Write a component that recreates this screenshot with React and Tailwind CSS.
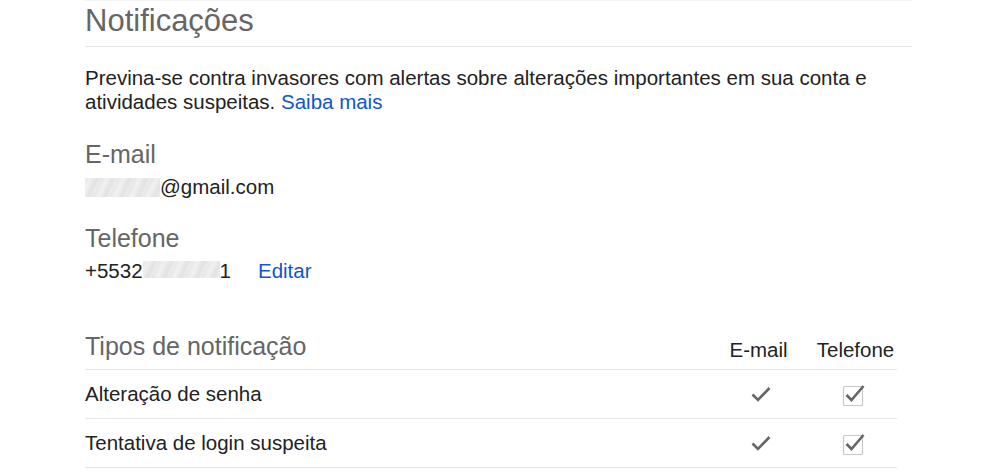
import React from 'react'

const Check = () => (
  <svg width="20" height="17" viewBox="0 0 20 17" fill="none">
    <path d="M1.5 8.5 L7 14 L18.5 2" stroke="#666" strokeWidth="2.6" />
  </svg>
)

const CheckBox = () => (
  <svg width="24" height="23" viewBox="0 0 24 23" fill="none">
    <rect x="1.5" y="3.5" width="19" height="19" rx="1" stroke="#c8c8c8" strokeWidth="1.2" fill="#fff" />
    <path d="M4.5 12 L9.5 17 L21.5 3" stroke="#666" strokeWidth="2.6" />
  </svg>
)

const Blur = ({ className }) => (
  <span
    className={
      'block bg-[repeating-linear-gradient(115deg,#e6e6e6_0px,#f1f1f1_5px,#e2e2e2_11px,#ededed_15px)] ' +
      className
    }
  />
)

const rows = ['Alteração de senha', 'Tentativa de login suspeita']

export default function App() {
  return (
    <div className="w-[984px] h-[476px] overflow-hidden bg-white font-['Liberation_Sans',Arial,sans-serif] text-[#222]">
      <div className="ml-[85px] w-[827px]">
        <div className="h-px bg-[#f3f3f3]" />
        <h1 className="mt-[2px] text-[31px] leading-[36px] text-[#666] font-normal">Notificações</h1>
        <div className="mt-[7px] h-px bg-[#e8e8e8]" />

        <p className="mt-[19px] text-[20.5px] leading-[24px]">
          Previna-se contra invasores com alertas sobre alterações importantes em sua conta e atividades suspeitas.{' '}
          <a className="text-[#1155cc]">Saiba mais</a>
        </p>

        <div className="mt-[25px] text-[25px] leading-[30px] text-[#666]">E-mail</div>
        <div className="mt-[6px] flex items-start text-[20.5px] leading-[24px]">
          <Blur className="mt-[3px] h-[19px] w-[75px]" />
          <span>@gmail.com</span>
        </div>

        <div className="mt-[24px] text-[25px] leading-[30px] text-[#666]">Telefone</div>
        <div className="mt-[6px] flex items-start text-[20.5px] leading-[24px]">
          <span>+5532</span>
          <Blur className="mt-[2px] h-[17px] w-[77px]" />
          <span>1</span>
          <a className="ml-[27px] text-[#1155cc]">Editar</a>
        </div>

        <div className="mt-[48px] w-[812px]">
          <div className="flex items-start h-[39px] border-b border-[#e6e6e6]">
            <div className="flex-1 text-[25px] leading-[30px] text-[#666]">Tipos de notificação</div>
            <div className="w-[98px] pt-[7px] pr-[5px] text-center text-[20.5px] leading-[24px]">E-mail</div>
            <div className="w-[87px] pt-[7px] pl-[4px] text-center text-[20.5px] leading-[24px]">Telefone</div>
          </div>
          {rows.map(r => (
            <div key={r} className="flex items-center h-[49px] border-b border-[#e6e6e6]">
              <div className="flex-1 text-[20.5px] leading-[24px]">{r}</div>
              <div className="w-[98px] flex justify-center">
                <Check />
              </div>
              <div className="w-[87px] flex justify-center">
                <CheckBox />
              </div>
            </div>
          ))}
        </div>
      </div>
    </div>
  )
}
